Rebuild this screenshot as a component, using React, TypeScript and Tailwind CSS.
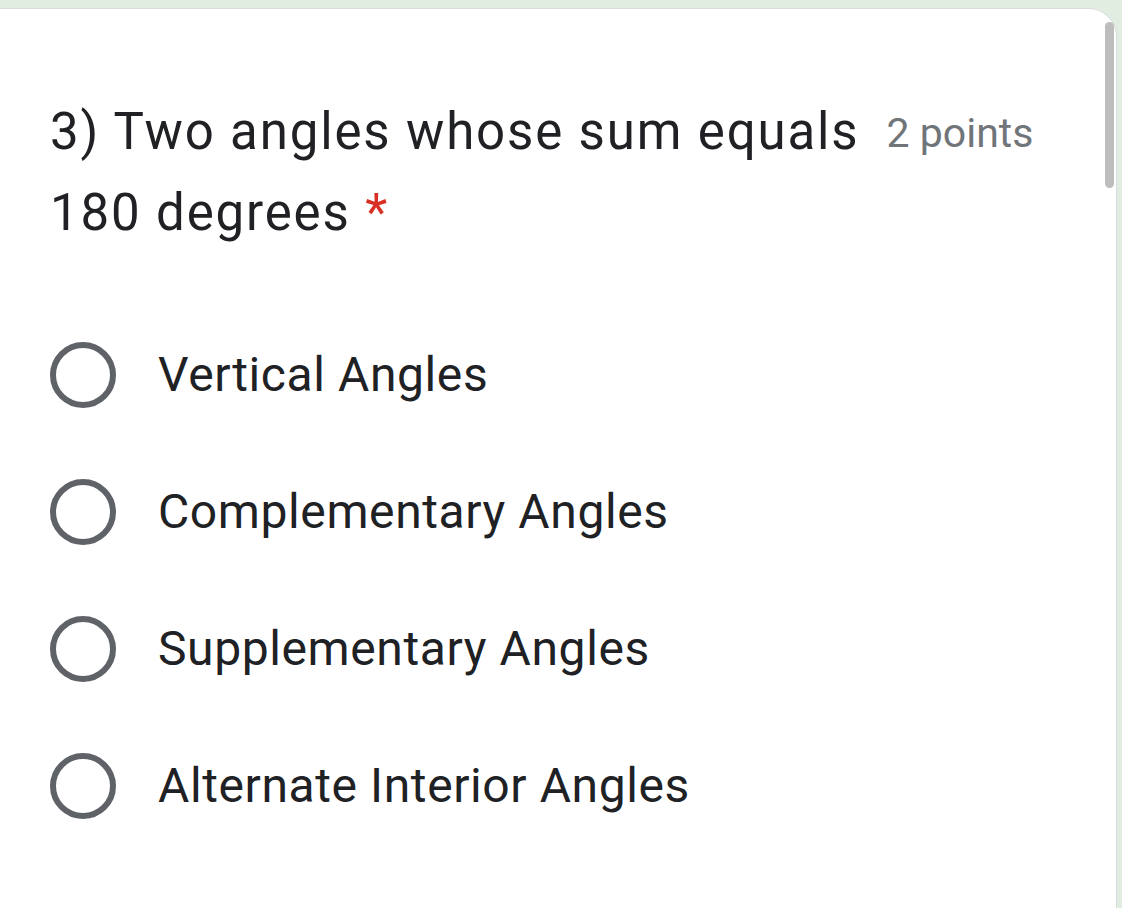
const options = [
  'Vertical Angles',
  'Complementary Angles',
  'Supplementary Angles',
  'Alternate Interior Angles',
];

function Radio() {
  return (
    <div className="w-[66px] h-[66px] shrink-0 rounded-full border-[6px] border-[#5f6368]" />
  );
}

export default function App() {
  return (
    <div
      className="h-[908px] overflow-hidden bg-[#e1ede0] pt-[8px] pr-[5px]"
      style={{ fontFamily: 'Roboto, "Noto Sans", sans-serif' }}
    >
      <div className="relative h-[920px] bg-white border border-l-0 border-[#d9dcdc] rounded-tr-[28px]">
        {/* scrollbar */}
        <div className="absolute right-[2px] top-[13px] w-[9px] h-[166px] rounded-full bg-[#bdbdbd]" />

        {/* Question */}
        <div className="pl-[50px] pt-[83px] pr-[40px]">
          <h2 className="text-[51px] leading-[80px] text-[#202124] tracking-[1.85px]">
            3) Two angles whose sum equals
            <span className="ml-[27px] text-[41px] tracking-[0px] text-[#70757a] align-[2px]">2 points</span>
            <br />
            180 degrees <span className="text-[#d93025]">*</span>
          </h2>
        </div>

        {/* Options */}
        <div className="flex flex-col gap-[71px] pl-[50px] mt-[89px]">
          {options.map((o) => (
            <label key={o} className="flex items-center gap-[42px]">
              <Radio />
              <span className="text-[48px] leading-[66px] text-[#202124] tracking-[0.6px]">{o}</span>
            </label>
          ))}
        </div>
      </div>
    </div>
  );
}
